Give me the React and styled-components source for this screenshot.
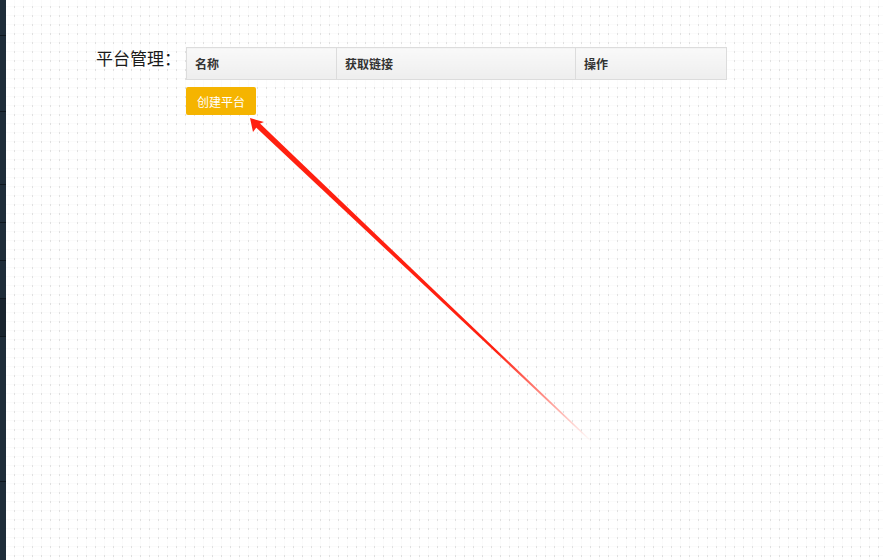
import React from "react";
import styled, { createGlobalStyle } from "styled-components";

const GlobalStyle = createGlobalStyle`
    html, body {
        margin: 0;
        padding: 0;
        width: 883px;
        height: 560px;
        overflow: hidden;
        font-family: "Noto Sans CJK SC", "Liberation Sans", sans-serif;
    }
`;

const Page = styled.div`
    position: relative;
    display: flex;
    width: 883px;
    height: 560px;
    background-color: #ffffff;
`;

// thin dark strip of the side menu at the left edge
const SideStrip = styled.div`
    width: 6px;
    flex-shrink: 0;
    display: flex;
    flex-direction: column;
    background: #1f2d39;
`;

const StripSegment = styled.div`
    height: ${(p) => p.h}px;
    flex-shrink: 0;
    background: ${(p) => (p.dark ? "#19242e" : "#1f2d39")};
    border-bottom: 1px solid #0f171e;
`;

const Canvas = styled.div`
    flex: 1;
    padding: 47px 0 0 90px;
    background-color: #ffffff;
    background-image:
        radial-gradient(circle at 8.5px 7px, #e0e0e0 0.5px, transparent 0.8px),
        linear-gradient(to right, #fbfbfb 1px, transparent 1px),
        linear-gradient(to bottom, #fbfbfb 1px, transparent 1px);
    background-size: 9px 9px;
    background-position: 0 0, 8px 0, 0 6px;
`;

const Row = styled.div`
    display: flex;
    align-items: flex-start;
`;

const Label = styled.div`
    width: 90px;
    flex-shrink: 0;
    font-size: 17px;
    line-height: 20px;
    padding-top: 1px;
    color: #1a1a1a;
`;

const Content = styled.div`
    display: flex;
    flex-direction: column;
    gap: 7px;
`;

const Table = styled.table`
    width: 540px;
    border-collapse: collapse;
    table-layout: fixed;
`;

const HeadCell = styled.th`
    width: ${(p) => p.w - 9}px;
    height: 31px;
    padding: 0 0 0 8px;
    text-align: left;
    font-size: 12px;
    font-weight: 700;
    color: #333;
    border: 1px solid #dcdcdc;
    background: linear-gradient(to bottom, #f9f9f9, #eeeeee);
`;

const Button = styled.button`
    width: 70px;
    height: 28px;
    padding: 0;
    border: none;
    border-radius: 2px;
    background: #f5b400;
    color: #ffffff;
    font-family: inherit;
    font-size: 12px;
    cursor: pointer;
`;

// annotation arrow drawn over the page
const ArrowLayer = styled.svg`
    position: absolute;
    left: 0;
    top: 0;
    pointer-events: none;
`;

const segments = [
    { h: 35 },
    { h: 75 },
    { h: 72 },
    { h: 37 },
    { h: 37 },
    { h: 37 },
    { h: 37, dark: true },
    { h: 144 },
];

export default function App() {
    return (
        <>
            <GlobalStyle />
            <Page>
                <SideStrip>
                    {segments.map((s, i) => (
                        <StripSegment key={i} h={s.h} dark={s.dark} />
                    ))}
                </SideStrip>
                <Canvas>
                    <Row>
                        <Label>平台管理：</Label>
                        <Content>
                            <Table>
                                <thead>
                                    <tr>
                                        <HeadCell w={150}>名称</HeadCell>
                                        <HeadCell w={239}>获取链接</HeadCell>
                                        <HeadCell w={151}>操作</HeadCell>
                                    </tr>
                                </thead>
                            </Table>
                            <div>
                                <Button>创建平台</Button>
                            </div>
                        </Content>
                    </Row>
                </Canvas>
                <ArrowLayer width="883" height="560" viewBox="0 0 883 560">
                    <defs>
                        <linearGradient id="fade" x1="250" y1="118" x2="592" y2="442" gradientUnits="userSpaceOnUse">
                            <stop offset="0" stopColor="#ff2010" stopOpacity="1" />
                            <stop offset="0.72" stopColor="#ff2010" stopOpacity="1" />
                            <stop offset="1" stopColor="#ff2010" stopOpacity="0" />
                        </linearGradient>
                    </defs>
                    <polygon
                        points="259,122.5 255,126.5 591.6,442.4 592.4,441.6"
                        fill="url(#fade)"
                    />
                    <polygon points="250,118 264,122 259,124 256,128 253,132" fill="#ff2010" />
                </ArrowLayer>
            </Page>
        </>
    );
}
